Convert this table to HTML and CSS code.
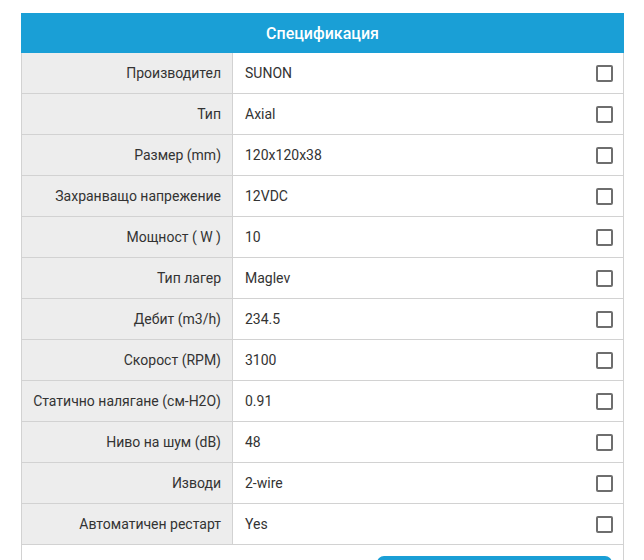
FILE: index.html
```html
<!DOCTYPE html>
<html lang="bg">
<head>
<meta charset="utf-8">
<link rel="stylesheet" href="styles.css">
</head>
<body>
<div class="wrap">
<table class="spec">
  <colgroup><col class="c-lbl"><col class="c-val"></colgroup>
  <thead>
    <tr><th colspan="2" class="head">Спецификация</th></tr>
  </thead>
  <tbody>
    <tr><td class="lbl">Производител</td><td class="val"><div class="cell"><span>SUNON</span><span class="cb"></span></div></td></tr>
    <tr><td class="lbl">Тип</td><td class="val"><div class="cell"><span>Axial</span><span class="cb"></span></div></td></tr>
    <tr><td class="lbl">Размер (mm)</td><td class="val"><div class="cell"><span>120x120x38</span><span class="cb"></span></div></td></tr>
    <tr><td class="lbl">Захранващо напрежение</td><td class="val"><div class="cell"><span>12VDC</span><span class="cb"></span></div></td></tr>
    <tr><td class="lbl">Мощност ( W )</td><td class="val"><div class="cell"><span>10</span><span class="cb"></span></div></td></tr>
    <tr><td class="lbl">Тип лагер</td><td class="val"><div class="cell"><span>Maglev</span><span class="cb"></span></div></td></tr>
    <tr><td class="lbl">Дебит (m3/h)</td><td class="val"><div class="cell"><span>234.5</span><span class="cb"></span></div></td></tr>
    <tr><td class="lbl">Скорост (RPM)</td><td class="val"><div class="cell"><span>3100</span><span class="cb"></span></div></td></tr>
    <tr><td class="lbl">Статично налягане (см-H2O)</td><td class="val"><div class="cell"><span>0.91</span><span class="cb"></span></div></td></tr>
    <tr><td class="lbl">Ниво на шум (dB)</td><td class="val"><div class="cell"><span>48</span><span class="cb"></span></div></td></tr>
    <tr><td class="lbl">Изводи</td><td class="val"><div class="cell"><span>2-wire</span><span class="cb"></span></div></td></tr>
    <tr><td class="lbl">Автоматичен рестарт</td><td class="val"><div class="cell"><span>Yes</span><span class="cb"></span></div></td></tr>
    <tr><td colspan="2" class="foot"><div class="foot-inner"><button class="btn" type="button" aria-label="Сравни"></button></div></td></tr>
  </tbody>
</table>
</div>
</body>
</html>
```
FILE: styles.css
```css
html, body {
  margin: 0;
  padding: 0;
  background: #fff;
}
body {
  font-family: Roboto, "Noto Sans", sans-serif;
  font-size: 14px;
  color: #333;
}
.wrap {
  height: 560px;
  overflow: hidden;
  box-sizing: border-box;
  padding: 13px 20px 0 21px;
}
.spec {
  width: 603px;
  border-collapse: collapse;
  table-layout: fixed;
}
.c-lbl {
  width: 211px;
}
.head {
  background: #1a9fd6;
  color: #fff;
  font-size: 16px;
  font-weight: 500;
  height: 38px;
  padding: 0;
  text-align: center;
  border: 1px solid #1a9fd6;
}
.spec td {
  border: 1px solid #d2d2d2;
  height: 40px;
  padding: 0;
}
.spec td.lbl {
  background: #ededed;
  text-align: right;
  padding-right: 11px;
}
.spec td.val {
  padding-left: 12px;
  padding-right: 10px;
}
.cell {
  display: flex;
  align-items: center;
  justify-content: space-between;
}
.cb {
  width: 17px;
  height: 17px;
  box-sizing: border-box;
  border: 2px solid #6e6e6e;
  border-radius: 2px;
  margin-top: 1px;
}
.spec td.foot {
  height: 30px;
  vertical-align: top;
  border-bottom: none;
}
.foot-inner {
  display: flex;
  justify-content: flex-end;
  padding: 11px 11px 0 0;
}
.btn {
  width: 235px;
  height: 36px;
  border: none;
  border-radius: 7px;
  background: #1a9fd6;
}
```
